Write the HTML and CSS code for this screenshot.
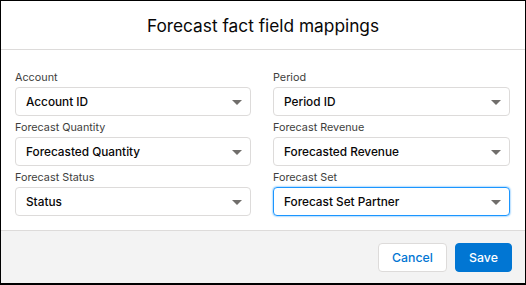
FILE: index.html
```html
<!DOCTYPE html>
<html lang="en">
<head>
  <meta charset="UTF-8">
  <title>Forecast fact field mappings</title>
  <link rel="stylesheet" href="styles.css">
</head>
<body>
  <div class="modal">
    <div class="modal-header">
      <h2>Forecast fact field mappings</h2>
    </div>

    <div class="modal-body">
      <div class="field">
        <label>Account</label>
        <div class="select">Account ID<span class="arrow"></span></div>
      </div>
      <div class="field">
        <label>Period</label>
        <div class="select">Period ID<span class="arrow"></span></div>
      </div>
      <div class="field">
        <label>Forecast Quantity</label>
        <div class="select">Forecasted Quantity<span class="arrow"></span></div>
      </div>
      <div class="field">
        <label>Forecast Revenue</label>
        <div class="select">Forecasted Revenue<span class="arrow"></span></div>
      </div>
      <div class="field">
        <label>Forecast Status</label>
        <div class="select">Status<span class="arrow"></span></div>
      </div>
      <div class="field">
        <label>Forecast Set</label>
        <div class="select focused">Forecast Set Partner<span class="arrow"></span></div>
      </div>
    </div>

    <div class="modal-footer">
      <button class="btn btn-neutral">Cancel</button>
      <button class="btn btn-brand">Save</button>
    </div>
  </div>
</body>
</html>
```

FILE: styles.css
```css
* {
  box-sizing: border-box;
  margin: 0;
  padding: 0;
  font-family: 'Inter', 'Liberation Sans', sans-serif;
}
body {
  background: #fff;
}
.modal {
  width: 526px;
  height: 285px;
  border: 1px solid #000;
  border-bottom-width: 2px;
  display: flex;
  flex-direction: column;
  background: #fff;
}
.modal-header {
  height: 49px;
  border-bottom: 1px solid #dddbda;
  display: flex;
  align-items: center;
  justify-content: center;
}
.modal-header h2 {
  font-size: 17.3px;
  font-weight: 400;
  color: #080707;
  padding-top: 1px;
}
.modal-body {
  padding: 19px 15px 0 14px;
  display: grid;
  grid-template-columns: 236px 237px;
  align-content: start;
  column-gap: 22px;
  row-gap: 3px;
  flex: 1;
}
.field label {
  display: block;
  font-size: 10.8px;
  line-height: 18px;
  color: #3e3e3c;
}
.select {
  position: relative;
  height: 29px;
  border: 1px solid #dddbda;
  border-radius: 4px;
  padding: 0 10px;
  display: flex;
  align-items: center;
  font-size: 11.8px;
  font-weight: 500;
  color: #080707;
}
.select.focused {
  border-color: #1b96ff;
  box-shadow: 0 0 2px #1b96ff;
}
.arrow {
  position: absolute;
  right: 8px;
  top: 12px;
  width: 0;
  height: 0;
  border-left: 5px solid transparent;
  border-right: 5px solid transparent;
  border-top: 5px solid #706e6b;
}
.modal-footer {
  height: 53px;
  background: #f3f3f3;
  border-top: 1px solid #dddbda;
  display: flex;
  align-items: center;
  justify-content: flex-end;
  gap: 8px;
  padding-right: 13px;
}
.btn {
  height: 29px;
  border-radius: 4px;
  font-size: 12.3px;
  font-weight: 500;
  border: 1px solid #dddbda;
  cursor: pointer;
}
.btn-neutral {
  width: 69px;
  background: #fff;
  color: #0176d3;
}
.btn-brand {
  width: 57px;
  background: #0176d3;
  border-color: #0176d3;
  color: #fff;
}
```
